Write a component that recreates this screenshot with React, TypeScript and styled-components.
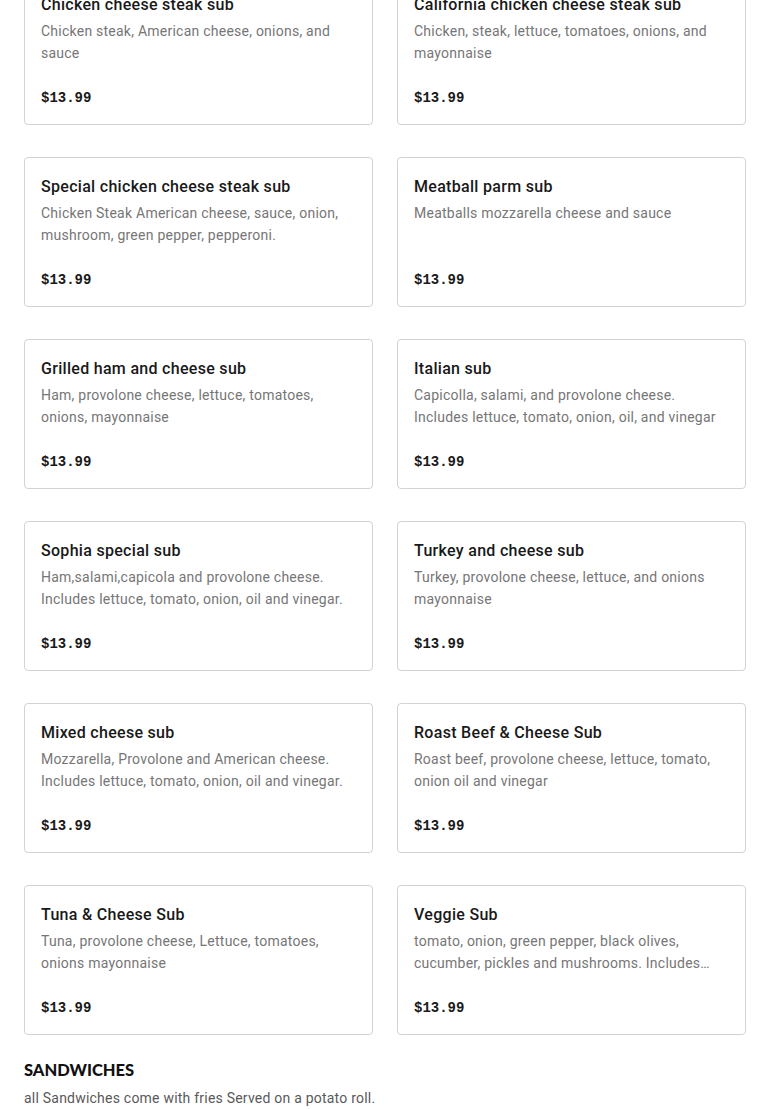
import React from "react";
import styled, { createGlobalStyle } from "styled-components";

const GlobalStyle = createGlobalStyle`
  body {
    margin: 0;
    background: #ffffff;
    font-family: Roboto, "Liberation Sans", sans-serif;
    color: #191919;
  }
`;

const Page = styled.main`
  padding: 0 24px;
  margin-top: -25px;
`;

const Grid = styled.section`
  display: grid;
  grid-template-columns: 1fr 1fr;
  column-gap: 24px;
  row-gap: 32px;
`;

const Card = styled.article`
  box-sizing: border-box;
  height: 150px;
  border: 1px solid #d3d3d3;
  border-radius: 4px;
  padding: 17px 16px 16px;
  display: flex;
  flex-direction: column;
  background: #fff;
`;

const Title = styled.h3`
  margin: 0;
  font-size: 16px;
  line-height: 24px;
  font-weight: 500;
  letter-spacing: 0.3px;
  color: #191919;
  white-space: nowrap;
  overflow: hidden;
  text-overflow: ellipsis;
`;

const Description = styled.p`
  margin: 3px 0 0;
  font-size: 14px;
  line-height: 22px;
  letter-spacing: 0.24px;
  color: #767676;
  display: -webkit-box;
  -webkit-line-clamp: 2;
  -webkit-box-orient: vertical;
  overflow: hidden;
`;

const Price = styled.span`
  margin-top: auto;
  font-family: "Liberation Mono", "DejaVu Sans Mono", monospace;
  font-weight: 700;
  font-size: 14px;
  line-height: 20px;
  color: #191919;
`;

const Section = styled.section`
  margin-top: 23px;
`;

const SectionTitle = styled.h2`
  margin: 0;
  font-family: Lato, "Liberation Sans", sans-serif;
  font-weight: 900;
  font-size: 16.5px;
  line-height: 24px;
  text-transform: uppercase;
  color: #111;
`;

const SectionNote = styled.p`
  margin: 6px 0 0;
  font-size: 14px;
  line-height: 20px;
  letter-spacing: 0.22px;
  color: #595959;
`;

type Item = { name: string; desc: string; price: string };

const subs: Item[] = [
  { name: "Chicken cheese steak sub", desc: "Chicken steak, American cheese, onions, and sauce", price: "$13.99" },
  { name: "California chicken cheese steak sub", desc: "Chicken, steak, lettuce, tomatoes, onions, and mayonnaise", price: "$13.99" },
  { name: "Special chicken cheese steak sub", desc: "Chicken Steak American cheese, sauce, onion, mushroom, green pepper, pepperoni.", price: "$13.99" },
  { name: "Meatball parm sub", desc: "Meatballs mozzarella cheese and sauce", price: "$13.99" },
  { name: "Grilled ham and cheese sub", desc: "Ham, provolone cheese, lettuce, tomatoes, onions, mayonnaise", price: "$13.99" },
  { name: "Italian sub", desc: "Capicolla, salami, and provolone cheese. Includes lettuce, tomato, onion, oil, and vinegar", price: "$13.99" },
  { name: "Sophia special sub", desc: "Ham,salami,capicola and provolone cheese. Includes lettuce, tomato, onion, oil and vinegar.", price: "$13.99" },
  { name: "Turkey and cheese sub", desc: "Turkey, provolone cheese, lettuce, and onions mayonnaise", price: "$13.99" },
  { name: "Mixed cheese sub", desc: "Mozzarella, Provolone and American cheese. Includes lettuce, tomato, onion, oil and vinegar.", price: "$13.99" },
  { name: "Roast Beef & Cheese Sub", desc: "Roast beef, provolone cheese, lettuce, tomato, onion oil and vinegar", price: "$13.99" },
  { name: "Tuna & Cheese Sub", desc: "Tuna, provolone cheese, Lettuce, tomatoes, onions mayonnaise", price: "$13.99" },
  { name: "Veggie Sub", desc: "tomato, onion, green pepper, black olives, cucumber, pickles and mushrooms. Includes lettuce, oil and vinegar.", price: "$13.99" },
];

const MenuCard = ({ item }: { item: Item }) => (
  <Card>
    <Title>{item.name}</Title>
    <Description>{item.desc}</Description>
    <Price>{item.price}</Price>
  </Card>
);

export default function App() {
  return (
    <>
      <GlobalStyle />
      <Page>
        <Grid>
          {subs.map((item) => (
            <MenuCard key={item.name} item={item} />
          ))}
        </Grid>
        <Section>
          <SectionTitle>Sandwiches</SectionTitle>
          <SectionNote>all Sandwiches come with fries Served on a potato roll.</SectionNote>
        </Section>
      </Page>
    </>
  );
}
